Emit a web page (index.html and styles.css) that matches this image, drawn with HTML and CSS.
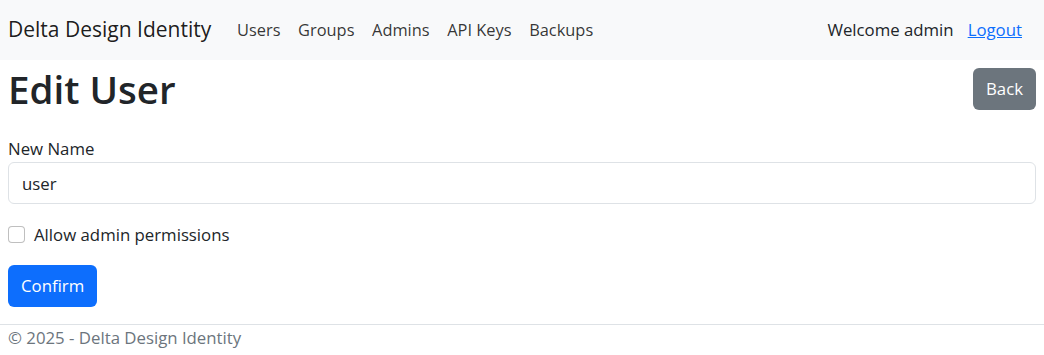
FILE: index.html
```html
<!DOCTYPE html>
<html lang="en">
<head>
  <meta charset="UTF-8" />
  <meta name="viewport" content="width=device-width, initial-scale=1.0" />
  <title>Edit User - Delta Design Identity</title>
  <link rel="stylesheet" href="styles.css">
</head>
<body>
  <header class="navbar">
    <a class="brand" href="#">Delta Design Identity</a>
    <nav class="nav-links">
      <a class="nav-link" href="#">Users</a>
      <a class="nav-link" href="#">Groups</a>
      <a class="nav-link" href="#">Admins</a>
      <a class="nav-link" href="#">API Keys</a>
      <a class="nav-link" href="#">Backups</a>
    </nav>
    <div class="nav-user">
      <span class="welcome">Welcome admin</span>
      <a class="logout" href="#">Logout</a>
    </div>
  </header>

  <main class="container">
    <div class="page-head">
      <h1>Edit User</h1>
      <a class="btn btn-secondary" href="#">Back</a>
    </div>

    <form class="edit-form">
      <label class="form-label" for="name">New Name</label>
      <input class="form-control" type="text" id="name" value="user" />

      <div class="form-check">
        <input class="check-input" type="checkbox" id="admin" />
        <label for="admin">Allow admin permissions</label>
      </div>

      <button class="btn btn-primary" type="submit">Confirm</button>
    </form>
  </main>

  <footer class="footer">
    &copy; 2025 - Delta Design Identity
  </footer>
</body>
</html>
```

FILE: styles.css
```css
:root {
  --text: #212529;
  --muted: #6c757d;
  --primary: #0d6efd;
  --secondary: #6c757d;
  --nav-bg: #f8f9fa;
  --border: #dee2e6;
}

* {
  box-sizing: border-box;
}

body {
  margin: 0;
  font-family: 'Open Sans', 'Noto Sans', sans-serif;
  font-size: 16.8px;
  line-height: 1.5;
  color: var(--text);
  background: #fff;
}

a {
  text-decoration: none;
}

.navbar {
  display: flex;
  align-items: center;
  height: 60px;
  padding: 0 22px 0 8px;
  background-color: var(--nav-bg);
}

.brand {
  font-size: 21px;
  color: rgba(0, 0, 0, 0.9);
  margin-right: 17px;
}

.nav-links {
  display: flex;
  flex: 1;
}

.nav-link {
  padding: 0 8.8px;
  font-size: 16.4px;
  color: rgba(0, 0, 0, 0.8);
}

.nav-user {
  display: flex;
  gap: 14px;
}

.logout {
  color: var(--primary);
  text-decoration: underline;
}

.container {
  padding: 0 8px;
}

.page-head {
  display: flex;
  justify-content: space-between;
  align-items: center;
  padding-top: 5px;
}

h1 {
  margin: 0;
  font-size: 38.5px;
  font-weight: 600;
  line-height: 48px;
}

.btn {
  display: inline-block;
  height: 42px;
  padding: 0 13px;
  border: none;
  border-radius: 6px;
  font: inherit;
  line-height: 42px;
  color: #fff;
  cursor: pointer;
}

.btn-secondary {
  background-color: var(--secondary);
}

.btn-primary {
  background-color: var(--primary);
}

.edit-form {
  margin-top: 23px;
}

.form-label {
  display: block;
  margin-bottom: 1px;
}

.form-control {
  display: block;
  width: 100%;
  height: 42px;
  padding: 0 13px;
  border: 1px solid var(--border);
  border-radius: 6px;
  font: inherit;
  color: var(--text);
}

.form-check {
  display: flex;
  align-items: center;
  gap: 9px;
  margin: 18px 0 18px;
}

.check-input {
  appearance: none;
  width: 17px;
  height: 17px;
  margin: 0;
  border: 1px solid rgba(0, 0, 0, 0.25);
  border-radius: 4px;
  background: #fff;
}

.footer {
  margin-top: 17px;
  padding: 0 8px;
  border-top: 1px solid var(--border);
  color: var(--muted);
}
```
